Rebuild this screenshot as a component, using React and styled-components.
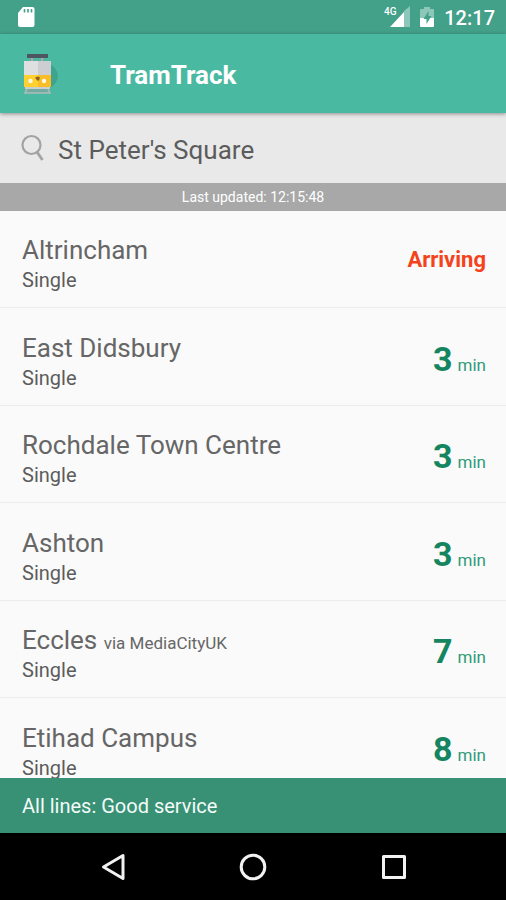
import React from "react";
import styled, { createGlobalStyle } from "styled-components";

const GlobalStyle = createGlobalStyle`
  *, *::before, *::after { box-sizing: border-box; }
  body { margin: 0; background: #fafafa; }
  button, input { font: inherit; }
`;

const Screen = styled.div`
  display: flex;
  flex-direction: column;
  height: 100vh;
  overflow: hidden;
  font-family: Roboto, "Noto Sans", sans-serif;
  color: #5c5c5c;
  background: #fafafa;
`;

const StatusBar = styled.div`
  display: flex;
  flex: none;
  align-items: center;
  height: 34px;
  padding: 0 11px 0 17px;
  color: #fff;
  background: #43a089;
`;

const StatusIcons = styled.div`
  display: flex;
  align-items: center;
  gap: 10px;
  margin-left: auto;
`;

const Clock = styled.time`
  font-size: 20px;
  line-height: 24px;
  font-weight: 500;
  padding-top: 2px;
`;

const AppBar = styled.header`
  position: relative;
  display: flex;
  flex: none;
  align-items: center;
  gap: 50px;
  height: 79px;
  padding: 2px 20px 0;
  color: #fff;
  background: #4ab9a1;
  box-shadow: 0 1px 4px rgba(0, 0, 0, 0.4);
`;

const Title = styled.h1`
  margin: 0;
  font-size: 26px;
  line-height: 32px;
  font-weight: 700;
`;

const SearchBar = styled.form`
  display: flex;
  flex: none;
  align-items: center;
  gap: 14px;
  height: 70px;
  padding: 4px 20px 0;
  color: #a3a3a3;
  background: #e9e9e9;
`;

const SearchLabel = styled.label`
  display: flex;
  padding-bottom: 4px;
`;

const SearchInput = styled.input`
  flex: 1;
  min-width: 0;
  height: 40px;
  padding: 0;
  border: 0;
  outline: 0;
  background: none;
  color: #5c5c5c;
  font-size: 26px;
`;

const Updated = styled.p`
  flex: none;
  margin: 0;
  font-size: 14px;
  line-height: 28px;
  text-align: center;
  color: #fff;
  background: #a8a8a8;
`;

const Departures = styled.ul`
  flex: 1;
  min-height: 0;
  margin: 0;
  padding: 0;
  list-style: none;
  overflow-y: auto;
  scrollbar-width: none;
`;

const Departure = styled.li`
  display: flex;
  align-items: center;
  justify-content: space-between;
  height: 97px;
  padding: 10px 20px 0 22px;
  border-bottom: 1px solid #ececec;

  &:nth-child(even) { height: 98px; }
`;

const Destination = styled.h2`
  margin: 0;
  font-size: 26px;
  line-height: 32px;
  font-weight: 400;
  color: #666;
`;

const Via = styled.span`
  font-size: 17px;
  line-height: 20px;
`;

const Carriages = styled.p`
  margin: 0;
  font-size: 20px;
  line-height: 28px;
`;

const Arriving = styled.strong`
  padding-bottom: 8px;
  font-size: 22px;
  line-height: 28px;
  font-weight: 700;
  color: #f4431c;
`;

const Wait = styled.span`
  display: flex;
  align-items: baseline;
  gap: 5px;
  font-size: 17px;
  line-height: 40px;
  color: #319a79;
`;

const Minutes = styled.strong`
  font-size: 34px;
  font-weight: 700;
  color: #148560;
`;

const ServiceStatus = styled.footer`
  flex: none;
  padding: 1px 22px 0;
  font-size: 20px;
  line-height: 54px;
  font-weight: 400;
  color: #f4fcf9;
  background: #389075;
`;

const NavBar = styled.nav`
  display: flex;
  flex: none;
  align-items: center;
  justify-content: center;
  gap: 84px;
  height: 67px;
  background: #000;
`;

const NavButton = styled.button`
  display: grid;
  place-items: center;
  width: 56px;
  height: 56px;
  padding: 0;
  border: 0;
  color: #f2f2f2;
  background: none;
`;

const SdCardIcon = () => (
  <svg width="18" height="22" viewBox="0 0 18 22" aria-hidden="true">
    <path fill="#fff" d="M6 1h9.500a2 2 0 0 1 2 2v16a2 2 0 0 1-2 2H3a2 2 0 0 1-2-2V7z" />
    <path stroke="#43a089" strokeWidth="1.600" d="M7.500 3v3.500M11 3v3.500M14.500 3v3.500" />
  </svg>
);

const SignalIcon = () => (
  <svg width="26" height="22" viewBox="0 0 26 22" aria-hidden="true">
    <path fill="#8cc7b9" d="M20 5l6-5v21h-6z" />
    <path fill="#fff" d="M20 6v15H6z" />
    <text x="0" y="9" fill="#fff" fontFamily="Roboto, sans-serif" fontSize="10" fontWeight="500">4G</text>
  </svg>
);

const BatteryIcon = () => (
  <svg width="14" height="22" viewBox="0 0 14 22" aria-hidden="true">
    <path fill="#8cc7b9" d="M4 1h6v2h3a1 1 0 0 1 1 1v8H0V4a1 1 0 0 1 1-1h3z" />
    <path fill="#fff" d="M0 12h14v8a1 1 0 0 1-1 1H1a1 1 0 0 1-1-1z" />
    <path fill="#43a089" d="M8.500 5L3.500 13H6.500v5l5-8H8.500z" />
  </svg>
);

const TramIcon = () => (
  <svg width="40" height="44" viewBox="0 1 40 44" aria-hidden="true">
    <path fill="#3fa48d" d="M30 12c5 3 8 8 8 12s-3 9-8 12z" />
    <path stroke="#c99aaa" strokeWidth="2" d="M12 6v4M22 6v4" />
    <path fill="#4c5560" d="M7 2h21v4H7z" />
    <path fill="#dedfe1" d="M4 9h14v15H4z" />
    <path fill="#cdced2" d="M18 9h13v15H18z" />
    <path fill="#ffd02f" d="M4 23h14v12H4z" />
    <path fill="#f8bd27" d="M18 23h13v12H18z" />
    <circle cx="10.500" cy="29" r="2.200" fill="#fffbe6" />
    <circle cx="24" cy="29" r="2.200" fill="#fffbe6" />
    <path fill="#8a651e" d="M15 25.500l3-1 2 1-1 3h-2z" />
    <path fill="#c9cfd0" d="M5 35h25v2H5z" />
    <path fill="#75aaa0" d="M6 37h23l1 4H5z" />
    <path fill="none" stroke="#aebdba" strokeWidth="1.500" d="M7 37l-2 4h25l-2-4" />
  </svg>
);

const SearchIcon = () => (
  <svg width="24" height="28" viewBox="0 0 24 28" fill="none" stroke="currentColor" strokeWidth="2.200" aria-hidden="true">
    <circle cx="11.500" cy="11" r="9" />
    <path strokeWidth="2.800" d="M17 18l5.500 8" />
  </svg>
);

const BackIcon = () => (
  <svg width="28" height="30" viewBox="0 0 28 30" fill="none" stroke="currentColor" strokeWidth="3" strokeLinejoin="round" aria-hidden="true">
    <path d="M24 3.500v23L4.500 15z" />
  </svg>
);

const HomeIcon = () => (
  <svg width="28" height="28" viewBox="0 0 28 28" fill="none" stroke="currentColor" strokeWidth="3" aria-hidden="true">
    <circle cx="14" cy="14" r="11.800" />
  </svg>
);

const RecentsIcon = () => (
  <svg width="26" height="26" viewBox="0 0 26 26" fill="none" stroke="currentColor" strokeWidth="3" strokeLinejoin="round" aria-hidden="true">
    <path d="M3.500 2.500h21v21h-21z" />
  </svg>
);

const departures = [
  { to: "Altrincham", minutes: 0 },
  { to: "East Didsbury", minutes: 3 },
  { to: "Rochdale Town Centre", minutes: 3 },
  { to: "Ashton", minutes: 3 },
  { to: "Eccles", via: "via MediaCityUK", minutes: 7 },
  { to: "Etihad Campus", minutes: 8 },
];

export default function App() {
  return (
    <Screen>
      <GlobalStyle />
      <StatusBar>
        <SdCardIcon />
        <StatusIcons>
          <SignalIcon />
          <BatteryIcon />
          <Clock>12:17</Clock>
        </StatusIcons>
      </StatusBar>
      <AppBar>
        <TramIcon />
        <Title>TramTrack</Title>
      </AppBar>
      <SearchBar onSubmit={(event) => event.preventDefault()}>
        <SearchLabel htmlFor="stop" aria-label="Stop">
          <SearchIcon />
        </SearchLabel>
        <SearchInput id="stop" type="text" aria-label="Stop" defaultValue="St Peter's Square" />
      </SearchBar>
      <Updated>Last updated: 12:15:48</Updated>
      <Departures>
        {departures.map(({ to, via, minutes }) => (
          <Departure key={to}>
            <div>
              <Destination>
                {to} {via && <Via>{via}</Via>}
              </Destination>
              <Carriages>Single</Carriages>
            </div>
            {minutes === 0 ? (
              <Arriving>Arriving</Arriving>
            ) : (
              <Wait>
                <Minutes>{minutes}</Minutes>
                min
              </Wait>
            )}
          </Departure>
        ))}
      </Departures>
      <ServiceStatus>All lines: Good service</ServiceStatus>
      <NavBar>
        <NavButton type="button" aria-label="Back"><BackIcon /></NavButton>
        <NavButton type="button" aria-label="Home"><HomeIcon /></NavButton>
        <NavButton type="button" aria-label="Recent apps"><RecentsIcon /></NavButton>
      </NavBar>
    </Screen>
  );
}
